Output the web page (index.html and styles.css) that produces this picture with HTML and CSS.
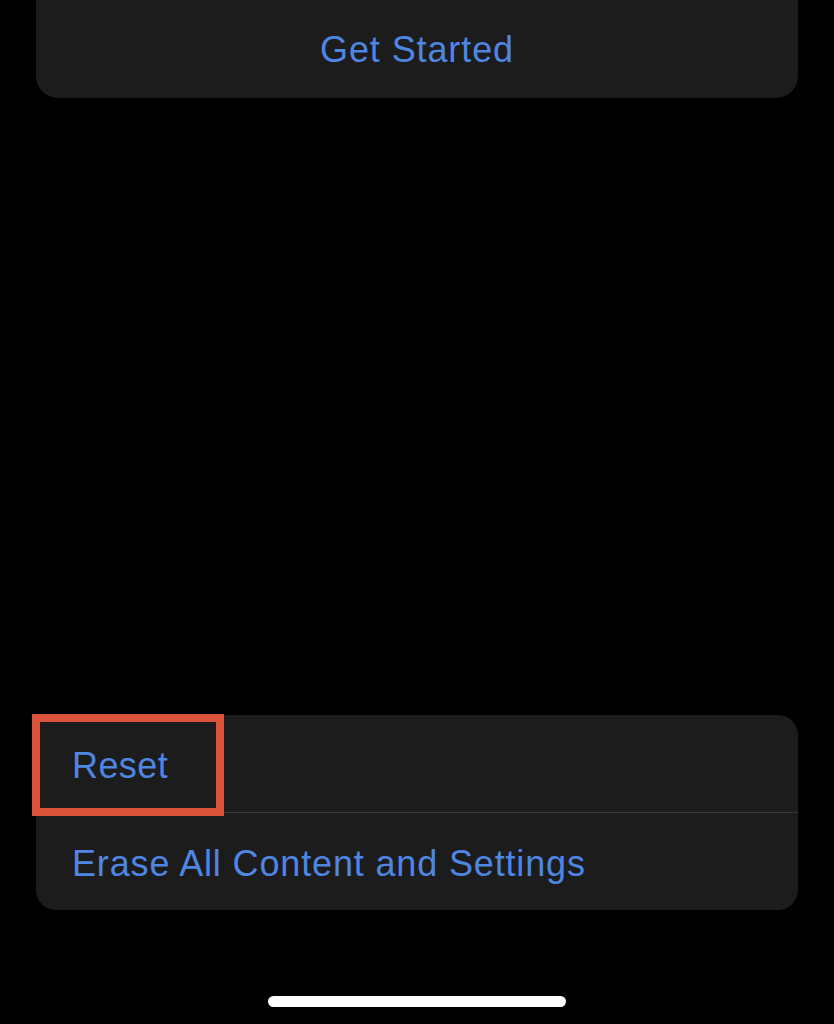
FILE: index.html
```html
<!DOCTYPE html>
<html lang="en">
<head>
<meta charset="utf-8">
<title>Reset</title>
<link rel="stylesheet" href="styles.css">
</head>
<body>
  <div class="screen">
    <div class="card card-top">
      <div class="row row-center">Get Started</div>
    </div>
    <div class="card card-bottom">
      <div class="row">Reset</div>
      <div class="divider"></div>
      <div class="row row-wide">Erase All Content and Settings</div>
      <div class="highlight"></div>
    </div>
    <div class="home-indicator"></div>
  </div>
</body>
</html>
```
FILE: styles.css
```css
html, body {
  margin: 0;
  padding: 0;
  background: #000;
}
.screen {
  width: 834px;
  height: 1024px;
  overflow: hidden;
  display: flex;
  flex-direction: column;
  font-family: "Liberation Sans", Arial, sans-serif;
}
.card {
  background: #1c1c1d;
  margin: 0 36px;
}
.card-top {
  height: 98px;
  border-radius: 0 0 22px 22px;
}
.card-bottom {
  margin-top: 617px;
  border-radius: 20px;
  position: relative;
}
.row {
  height: 97px;
  box-sizing: border-box;
  padding: 33px 36px 0;
  font-size: 36px;
  line-height: 36px;
  letter-spacing: 0.4px;
  color: #4f86e2;
  white-space: nowrap;
}
.row-wide {
  letter-spacing: 0.85px;
}
.row-center {
  text-align: center;
  padding: 32px 0 0;
  letter-spacing: 0.9px;
}
.divider {
  height: 1px;
  background: #38383a;
  margin-left: 36px;
}
.highlight {
  position: absolute;
  left: -4px;
  top: -1px;
  width: 192px;
  height: 102px;
  box-sizing: border-box;
  border: 8px solid #dc533b;
}
.home-indicator {
  width: 298px;
  height: 11px;
  border-radius: 6px;
  background: #fff;
  margin: 86px auto 0;
}
```
